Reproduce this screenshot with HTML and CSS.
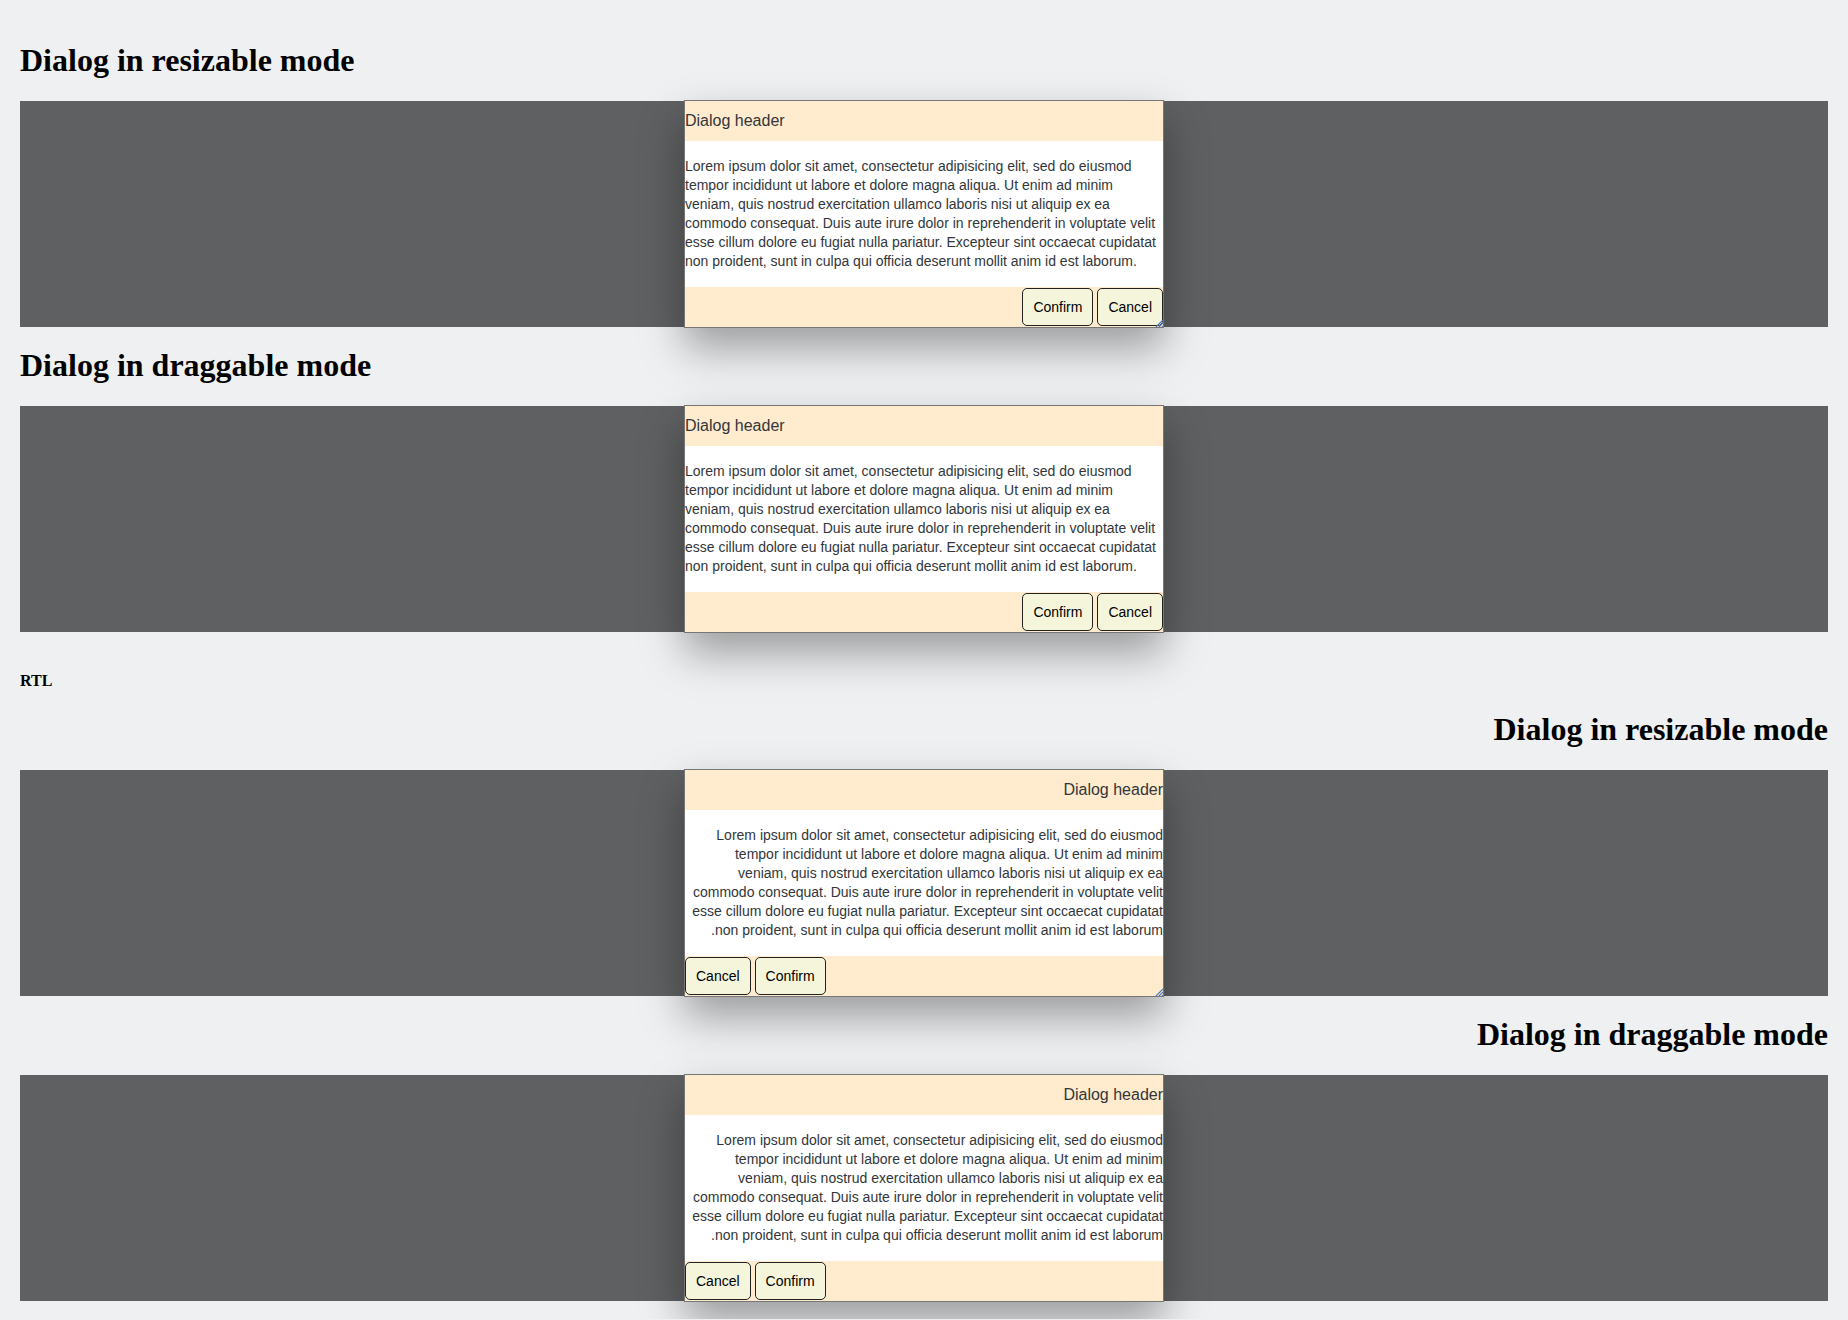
FILE: index.html
```html
<!DOCTYPE html>
<html lang="en">
<head>
<meta charset="utf-8">
<title>Dialog modes</title>
<link rel="stylesheet" href="styles.css">
</head>
<body>
<section class="demo">
  <h1 class="demo-title">Dialog in resizable mode</h1>
  <div class="backdrop">
    <div class="dialog">
      <div class="dialog-header">Dialog header</div>
      <div class="dialog-body">Lorem ipsum dolor sit amet, consectetur adipisicing elit, sed do eiusmod tempor incididunt ut labore et dolore magna aliqua. Ut enim ad minim veniam, quis nostrud exercitation ullamco laboris nisi ut aliquip ex ea commodo consequat. Duis aute irure dolor in reprehenderit in voluptate velit esse cillum dolore eu fugiat nulla pariatur. Excepteur sint occaecat cupidatat non proident, sunt in culpa qui officia deserunt mollit anim id est laborum.</div>
      <div class="dialog-footer">
        <button class="btn">Confirm</button>
        <button class="btn">Cancel</button>
      </div>
      <svg class="resize-handle" width="8" height="8" viewBox="0 0 8 8" aria-hidden="true"><path d="M8 1 L1 8 M8 4 L4 8 M8 7 L7 8" stroke="#4f78b8" stroke-width="1.2" fill="none"/></svg>
    </div>
  </div>
  <h1 class="demo-title">Dialog in draggable mode</h1>
  <div class="backdrop">
    <div class="dialog">
      <div class="dialog-header">Dialog header</div>
      <div class="dialog-body">Lorem ipsum dolor sit amet, consectetur adipisicing elit, sed do eiusmod tempor incididunt ut labore et dolore magna aliqua. Ut enim ad minim veniam, quis nostrud exercitation ullamco laboris nisi ut aliquip ex ea commodo consequat. Duis aute irure dolor in reprehenderit in voluptate velit esse cillum dolore eu fugiat nulla pariatur. Excepteur sint occaecat cupidatat non proident, sunt in culpa qui officia deserunt mollit anim id est laborum.</div>
      <div class="dialog-footer">
        <button class="btn">Confirm</button>
        <button class="btn">Cancel</button>
      </div>
    </div>
  </div>
</section>
<p class="rtl-label">RTL</p>
<section class="demo" dir="rtl">
  <h1 class="demo-title">Dialog in resizable mode</h1>
  <div class="backdrop">
    <div class="dialog">
      <div class="dialog-header">Dialog header</div>
      <div class="dialog-body">Lorem ipsum dolor sit amet, consectetur adipisicing elit, sed do eiusmod tempor incididunt ut labore et dolore magna aliqua. Ut enim ad minim veniam, quis nostrud exercitation ullamco laboris nisi ut aliquip ex ea commodo consequat. Duis aute irure dolor in reprehenderit in voluptate velit esse cillum dolore eu fugiat nulla pariatur. Excepteur sint occaecat cupidatat non proident, sunt in culpa qui officia deserunt mollit anim id est laborum.</div>
      <div class="dialog-footer">
        <button class="btn">Confirm</button>
        <button class="btn">Cancel</button>
      </div>
      <svg class="resize-handle" width="8" height="8" viewBox="0 0 8 8" aria-hidden="true"><path d="M8 1 L1 8 M8 4 L4 8 M8 7 L7 8" stroke="#4f78b8" stroke-width="1.2" fill="none"/></svg>
    </div>
  </div>
  <h1 class="demo-title">Dialog in draggable mode</h1>
  <div class="backdrop">
    <div class="dialog">
      <div class="dialog-header">Dialog header</div>
      <div class="dialog-body">Lorem ipsum dolor sit amet, consectetur adipisicing elit, sed do eiusmod tempor incididunt ut labore et dolore magna aliqua. Ut enim ad minim veniam, quis nostrud exercitation ullamco laboris nisi ut aliquip ex ea commodo consequat. Duis aute irure dolor in reprehenderit in voluptate velit esse cillum dolore eu fugiat nulla pariatur. Excepteur sint occaecat cupidatat non proident, sunt in culpa qui officia deserunt mollit anim id est laborum.</div>
      <div class="dialog-footer">
        <button class="btn">Confirm</button>
        <button class="btn">Cancel</button>
      </div>
    </div>
  </div>
</section>
</body>
</html>
```
FILE: styles.css
```css
html {
  background: #eef0f1;
}
body {
  margin: 0;
  padding: 22px 20px 18px;
  background: #eef0f1;
  font-family: "Liberation Serif", "Times New Roman", serif;
  color: #000;
}
.demo-title {
  font-size: 32px;
  line-height: 37px;
  font-weight: bold;
  margin: 20px 0 22px;
}
.rtl-label {
  font-size: 16px;
  line-height: 18px;
  font-weight: bold;
  margin: 40px 0 21px;
}
.backdrop {
  height: 226px;
  background: #5f6061;
  display: flex;
  justify-content: center;
  align-items: center;
}
.dialog {
  position: relative;
  flex: 0 0 auto;
  box-sizing: border-box;
  width: 480px;
  display: flex;
  flex-direction: column;
  background: #fff;
  border: 1px solid #767676;
  box-shadow: 0 20px 40px rgba(0, 0, 0, 0.35);
  font-family: "Liberation Sans", Arial, sans-serif;
  color: #32363a;
}
.dialog-header {
  height: 40px;
  display: flex;
  align-items: center;
  background: #ffebcd;
  font-size: 16px;
}
.dialog-body {
  padding: 16px 0;
  font-size: 14px;
  line-height: 19px;
  background: #fff;
}
.dialog-footer {
  height: 40px;
  display: flex;
  justify-content: flex-end;
  align-items: center;
  gap: 4px;
  background: #ffebcd;
}
.btn {
  box-sizing: border-box;
  height: 38px;
  padding: 0 10px;
  border: 1px solid #222;
  border-radius: 5px;
  background: #f5f5dc;
  color: #000;
  font-family: "Liberation Sans", Arial, sans-serif;
  font-size: 14px;
}
.resize-handle {
  position: absolute;
  right: 0;
  bottom: 0;
  display: block;
}
```
